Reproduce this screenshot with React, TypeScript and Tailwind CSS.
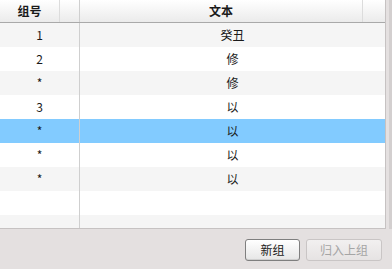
import React from "react";

const rows = [
  { id: "1", text: "癸丑" },
  { id: "2", text: "修" },
  { id: "*", text: "修" },
  { id: "3", text: "以" },
  { id: "*", text: "以", selected: true },
  { id: "*", text: "以" },
  { id: "*", text: "以" },
  { id: "", text: "" },
  { id: "", text: "" },
];

export default function App() {
  return (
    <div
      className="w-[392px] h-[269px] bg-[#e4e0e0] flex flex-col overflow-hidden text-[12px] text-[#1a1a1a]"
      style={{ fontFamily: '"Noto Sans CJK SC", "Liberation Sans", sans-serif' }}
    >
      <div className="flex h-[229px]">
        <div className="w-[386px] h-[229px] bg-white border-r border-b border-[#c6c2c2] flex flex-col overflow-hidden">
          {/* Header */}
          <div className="flex h-[23px] shrink-0 border-b border-[#a9a9a9] bg-gradient-to-b from-white to-[#ebebeb] font-bold">
            <div className="w-[60px] flex items-center justify-center border-r border-[#dcdcdc]">组号</div>
            <div className="w-[20px] border-r border-[#cfcfcf]" />
            <div className="w-[283px] flex items-center justify-center border-r border-[#dcdcdc]">文本</div>
            <div className="flex-1" />
          </div>
          {/* Rows */}
          {rows.map((r, i) => (
            <div
              key={i}
              className={`flex h-[24px] shrink-0 ${
                r.selected ? "bg-[#82cbff]" : i % 2 === 0 ? "bg-[#f5f5f5]" : "bg-white"
              }`}
            >
              <div className="w-[80px] flex items-center justify-center border-r border-[#cfcfcf]">{r.id}</div>
              <div className="flex-1 flex items-center justify-center">{r.text}</div>
            </div>
          ))}
        </div>
        <div className="flex-1 flex justify-end">
          <div className="w-[3px] bg-[#d3cfcf]" />
        </div>
      </div>
      <div className="flex justify-end gap-[6px] pt-[10px] pr-[10px]">
        <button className="w-[55px] h-[22px] rounded-[3px] border border-[#7f7f7f] bg-gradient-to-b from-white to-[#e6e6e6] text-[#1a1a1a] shadow-[inset_0_-1px_0_#cfcfcf]">
          新组
        </button>
        <button className="w-[76px] h-[22px] rounded-[3px] border border-[#c9c5c5] bg-gradient-to-b from-[#f2f0f0] to-[#e6e3e3] text-[#a5a5a5]">
          归入上组
        </button>
      </div>
    </div>
  );
}
